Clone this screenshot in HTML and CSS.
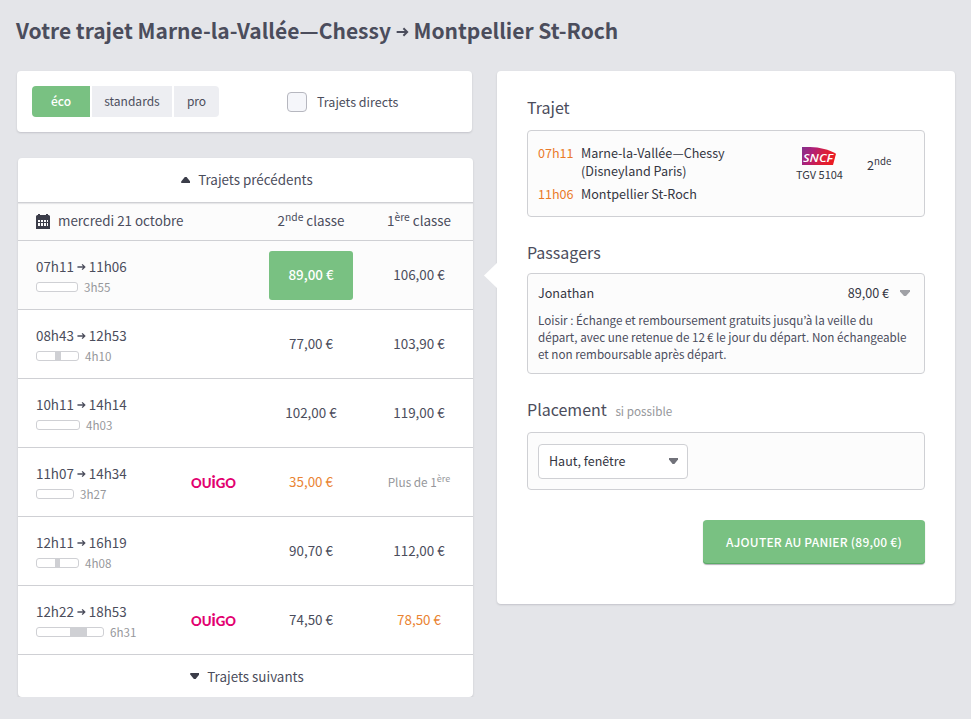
FILE: index.html
```
<!DOCTYPE html>
<html lang="fr">
<head>
  <meta charset="UTF-8" />
  <meta name="viewport" content="width=device-width, initial-scale=1.0" />
  <title>Votre trajet</title>
  <link rel="stylesheet" href="styles.css">
</head>
<body>
  <!-- shared symbols -->
  <svg class="symbols">
    <symbol id="arrow" viewBox="0 0 10 8">
      <path d="M0.5 4H8.4M5.7 1.1L8.6 4L5.7 6.9" fill="none" stroke="currentColor" stroke-width="1.5" />
    </symbol>
    <symbol id="ouigo" viewBox="0 0 46 14">
      <text x="0" y="13" textLength="45" lengthAdjust="spacingAndGlyphs" class="ouigo-text">OU<tspan class="ouigo-i">i</tspan>GO</text>
    </symbol>
  </svg>

  <h1>Votre trajet Marne-la-Vallée—Chessy <svg class="title-arrow"><use href="#arrow" /></svg> Montpellier St-Roch</h1>

  <div class="columns">
    <div class="left">
      <div class="card filters">
        <div class="tabs">
          <button class="tab active">éco</button>
          <button class="tab">standards</button>
          <button class="tab">pro</button>
        </div>
        <label class="direct"><input type="checkbox"> Trajets directs</label>
      </div>

      <div class="card trips">
        <div class="more previous"><span class="up"></span>Trajets précédents</div>
        <div class="trips-header">
          <div class="date">
            <svg width="14" height="15" viewBox="0 0 14 15">
              <path d="M0 2.5Q0 1 1.5 1H2V0H4V1H10V0H12V1H12.5Q14 1 14 2.5V15H0Z" fill="#3b3d49" />
              <path d="M2 6H12V13H2Z" fill="#3b3d49" />
              <path d="M2 6H4V8H2ZM5 6H7V8H5ZM8 6H10V8H8ZM11 6H12V8H11ZM2 9H4V12H2ZM5 9H7V12H5ZM8 9H10V12H8ZM11 9H12V12H11Z" fill="#fcfcfc" />
            </svg>
            mercredi 21 octobre
          </div>
          <div class="class-name second">2<sup>nde</sup> classe</div>
          <div class="class-name first">1<sup>ère</sup> classe</div>
        </div>

        <div class="trip selected">
          <div class="times">
            <div class="hours">07h11 <svg class="arrow"><use href="#arrow" /></svg> 11h06</div>
            <div class="duration"><span class="bar" style="width: 42px"></span>3h55</div>
          </div>
          <div class="carrier"></div>
          <div class="price chosen">89,00 €</div>
          <div class="price">106,00 €</div>
        </div>
        <div class="trip">
          <div class="times">
            <div class="hours">08h43 <svg class="arrow"><use href="#arrow" /></svg> 12h53</div>
            <div class="duration"><span class="bar" style="width: 43px"><i style="margin-left: 18px; width: 6px"></i></span>4h10</div>
          </div>
          <div class="carrier"></div>
          <div class="price">77,00 €</div>
          <div class="price">103,90 €</div>
        </div>
        <div class="trip">
          <div class="times">
            <div class="hours">10h11 <svg class="arrow"><use href="#arrow" /></svg> 14h14</div>
            <div class="duration"><span class="bar" style="width: 44px"></span>4h03</div>
          </div>
          <div class="carrier"></div>
          <div class="price">102,00 €</div>
          <div class="price">119,00 €</div>
        </div>
        <div class="trip">
          <div class="times">
            <div class="hours">11h07 <svg class="arrow"><use href="#arrow" /></svg> 14h34</div>
            <div class="duration"><span class="bar" style="width: 38px"></span>3h27</div>
          </div>
          <div class="carrier"><svg class="ouigo"><use href="#ouigo" /></svg></div>
          <div class="price promo">35,00 €</div>
          <div class="price sold-out">Plus de 1<sup>ère</sup></div>
        </div>
        <div class="trip">
          <div class="times">
            <div class="hours">12h11 <svg class="arrow"><use href="#arrow" /></svg> 16h19</div>
            <div class="duration"><span class="bar" style="width: 43px"><i style="margin-left: 18px; width: 5px"></i></span>4h08</div>
          </div>
          <div class="carrier"></div>
          <div class="price">90,70 €</div>
          <div class="price">112,00 €</div>
        </div>
        <div class="trip">
          <div class="times">
            <div class="hours">12h22 <svg class="arrow"><use href="#arrow" /></svg> 18h53</div>
            <div class="duration"><span class="bar" style="width: 68px"><i style="margin-left: 33px; width: 17px"></i></span>6h31</div>
          </div>
          <div class="carrier"><svg class="ouigo"><use href="#ouigo" /></svg></div>
          <div class="price">74,50 €</div>
          <div class="price promo">78,50 €</div>
        </div>
        <div class="more next"><span class="down"></span>Trajets suivants</div>
      </div>
    </div>

    <div class="card summary">
      <h2>Trajet</h2>
      <div class="box journey">
        <div class="stops">
          <span class="hour">07h11</span>
          <span>Marne-la-Vallée—Chessy<br>(Disneyland Paris)</span>
          <span class="hour">11h06</span>
          <span>Montpellier St-Roch</span>
        </div>
        <div class="train">
          <svg width="34" height="18" viewBox="0 0 34 18">
            <defs>
              <linearGradient id="sncf" x1="0" y1="0" x2="1" y2="0.25">
                <stop offset="0" stop-color="#82318c" />
                <stop offset="0.35" stop-color="#b01f77" />
                <stop offset="0.7" stop-color="#d91f3d" />
                <stop offset="1" stop-color="#ea1c24" />
              </linearGradient>
            </defs>
            <path d="M0 0H8C18 0.3 27 2.5 34 6.8L31 18H0Z" fill="url(#sncf)" />
            <text x="1" y="15.3" textLength="30" lengthAdjust="spacingAndGlyphs" class="sncf-text">SNCF</text>
          </svg>
          <span>TGV 5104</span>
        </div>
        <div class="class">2<sup>nde</sup></div>
      </div>

      <h2 class="tight">Passagers</h2>
      <div class="box passenger">
        <div class="passenger-head">
          <span>Jonathan</span>
          <span class="passenger-price">89,00 €</span>
          <span class="down"></span>
        </div>
        <p>Loisir : Échange et remboursement gratuits jusqu’à la veille du<br>départ, avec une retenue de 12<span class="thin"></span>€ le jour du départ. Non échangeable<br>et non remboursable après départ.</p>
      </div>

      <h2>Placement <small>si possible</small></h2>
      <div class="box placement">
        <div class="select">Haut, fenêtre <span class="down"></span></div>
      </div>

      <button class="add">AJOUTER AU PANIER (89,00 €)</button>
    </div>
  </div>
</body>
</html>
```
FILE: styles.css
```
* {
  box-sizing: border-box;
}
body {
  margin: 0;
  padding: 15px 16px 0 17px;
  background-color: #e4e5e9;
  color: #4b4d5c;
  font-family: "Noto Sans CJK KR", "Noto Sans CJK SC", sans-serif;
  font-size: 13.4px;
  line-height: 18px;
}
button {
  font-family: inherit;
  border: none;
  padding: 0;
  cursor: pointer;
}
sup {
  font-size: 77%;
  line-height: 0;
  vertical-align: 5px;
}
.symbols {
  display: none;
}
h1 {
  margin: 0 0 26px -1px;
  font-size: 21px;
  line-height: 30px;
  font-weight: bold;
  white-space: nowrap;
}
.title-arrow {
  width: 13px;
  height: 12px;
  vertical-align: 1px;
}
.columns {
  display: flex;
  align-items: flex-start;
  gap: 25px;
}
.left {
  width: 455px;
}
.card {
  background-color: #fff;
  border-radius: 4px;
  box-shadow: 0 1px 2px rgba(59, 61, 73, 0.2);
}

/* filters */
.filters {
  display: flex;
  align-items: center;
  height: 61px;
  padding-left: 15px;
  margin-bottom: 26px;
}
.tabs {
  display: flex;
  gap: 2px;
  width: 187px;
  margin-right: 68px;
}
.tab {
  width: 45px;
  height: 31px;
  padding-bottom: 2px;
  background-color: #edeef2;
  color: #4b4d5c;
  font-size: 12px;
  line-height: 29px;
  border-radius: 0 4px 4px 0;
}
.tab:nth-child(2) {
  width: 80px;
  border-radius: 0;
}
.tab.active {
  width: 58px;
  background-color: #79c182;
  color: #fff;
  font-weight: 500;
  border-radius: 4px 0 0 4px;
}
.direct {
  display: flex;
  align-items: center;
  gap: 10px;
  font-size: 12.5px;
}
.direct input {
  appearance: none;
  width: 20px;
  height: 20px;
  margin: 0;
  border: 1px solid #b6b7bf;
  border-radius: 4px;
  background-color: #f5f6fa;
}

/* list of trips */
.trips {
  width: 455px;
  margin-left: 1px;
}
.more {
  display: flex;
  align-items: center;
  justify-content: center;
  height: 42px;
  padding-left: 3px;
}
.previous {
  height: 45px;
  padding-bottom: 2px;
  border-bottom: 1px solid #cfd0d4;
}
.up, .down {
  width: 9px;
  height: 6px;
  margin-right: 8px;
  background-color: #3b3d49;
  clip-path: polygon(40% 0, 60% 0, 100% 75%, 100% 100%, 0 100%, 0 75%);
}
.previous .up {
  margin-top: 2px;
}
.down {
  clip-path: polygon(0 0, 100% 0, 100% 25%, 60% 100%, 40% 100%, 0 25%);
}
.trips-header, .trip {
  display: grid;
  grid-template-columns: 155px 78px 84px 24px 84px;
  align-items: center;
  padding-left: 18px;
  border-bottom: 1px solid #cfd0d4;
}
.trips-header {
  height: 38px;
  padding-bottom: 4px;
  background-color: #fcfcfc;
  box-shadow: inset 0 1px 1px rgba(59, 61, 73, 0.12);
}
.date {
  grid-column: 1 / 3;
  display: flex;
  align-items: center;
  gap: 8px;
}
.date svg {
  margin-top: 4px;
}
.class-name, .price {
  text-align: center;
  white-space: nowrap;
}
.price {
  padding-bottom: 2px;
}
.first, .price:last-child {
  grid-column: 5;
}
.trip {
  height: 69px;
}
.trip.selected {
  background-color: #fcfcfc;
}
.hours {
  margin-top: 3px;
}
.arrow {
  width: 9px;
  height: 8px;
  vertical-align: 1px;
}
.duration {
  display: flex;
  align-items: center;
  gap: 6px;
  margin-top: 3px;
  color: #96979b;
  font-size: 11.6px;
}
.bar {
  height: 10px;
  border: 1px solid #cfd0d4;
  border-radius: 3px;
  background-color: #fff;
}
.bar i {
  display: block;
  height: 8px;
  background-color: #cfd0d4;
}
.ouigo {
  display: block;
  width: 46px;
  height: 14px;
}
.ouigo-text {
  font-family: Lato, sans-serif;
  font-size: 13.5px;
  font-weight: 900;
  fill: #e2006f;
}
.ouigo-i {
  font-size: 16.5px;
}
.chosen {
  height: 49px;
  margin-top: 1px;
  background-color: #79c182;
  color: #fff;
  font-weight: 500;
  line-height: 47px;
  border-radius: 3px;
}
.promo {
  color: #ea8433;
}
.sold-out {
  color: #96979b;
  font-size: 11.8px;
  padding-bottom: 0;
}

/* summary of the selected trip */
.summary {
  position: relative;
  width: 458px;
  height: 533px;
  padding: 26px 30px 0;
}
.summary::before {
  content: "";
  position: absolute;
  left: -13px;
  top: 191px;
  width: 14px;
  height: 27px;
  background-color: #fff;
  clip-path: polygon(0 50%, 100% 0, 100% 100%);
}
h2 {
  height: 20px;
  margin: 0 0 13px;
  font-size: 16px;
  line-height: 20px;
  font-weight: normal;
}
h2.tight {
  margin-bottom: 11px;
}
h2 small {
  margin-left: 5px;
  color: #96979b;
  font-size: 11.7px;
}
.box {
  border: 1px solid #cfd0d4;
  border-radius: 4px;
  background-color: #fcfcfc;
  color: #343642;
  padding: 10px;
}
.journey {
  display: flex;
  height: 87px;
  margin-bottom: 25px;
  padding-top: 13px;
  font-size: 12.6px;
}
.stops {
  display: grid;
  grid-template-columns: 43px 208px;
  grid-template-rows: 36px 18px;
  row-gap: 5px;
}
.hour {
  color: #ea7a2a;
}
.train {
  display: flex;
  flex-direction: column;
  align-items: center;
  width: 61px;
  padding-top: 3px;
  font-size: 11px;
}
.train svg {
  margin-right: 2px;
}
.sncf-text {
  font-family: "Open Sans", sans-serif;
  font-size: 10px;
  font-weight: 600;
  font-style: italic;
  fill: #fff;
}
.class {
  margin: 12px 0 0 17px;
}
.passenger {
  height: 101px;
  margin-bottom: 25px;
}
.passenger-head {
  display: flex;
  align-items: center;
  font-size: 12.6px;
}
.passenger-price {
  margin: 0 11px 0 auto;
}
.passenger .down {
  width: 10px;
  margin-right: 4px;
  background-color: #a0a1a6;
}
.passenger p {
  margin: 9px 0 0;
  color: #4b4d5c;
  font-size: 11.67px;
  line-height: 17px;
  white-space: nowrap;
}
.thin {
  margin-left: 2px;
}
.placement {
  height: 58px;
  margin-bottom: 30px;
  padding-top: 11px;
}
.select {
  display: flex;
  align-items: center;
  justify-content: space-between;
  width: 150px;
  height: 35px;
  padding: 0 9px 1px 10px;
  border: 1px solid #cfd0d4;
  border-radius: 4px;
  background-color: #fff;
  font-size: 12.5px;
}
.select .down {
  margin: 0;
  background-color: #71727a;
}
.add {
  display: block;
  width: 222px;
  height: 44px;
  margin-left: auto;
  padding-bottom: 2px;
  background-color: #79c182;
  color: #fff;
  font-size: 12px;
  font-weight: 500;
  letter-spacing: 0.23px;
  border-radius: 4px;
  box-shadow: inset 0 -1px 0 #5aab66, 0 1px 1px rgba(59, 61, 73, 0.4);
}
```
